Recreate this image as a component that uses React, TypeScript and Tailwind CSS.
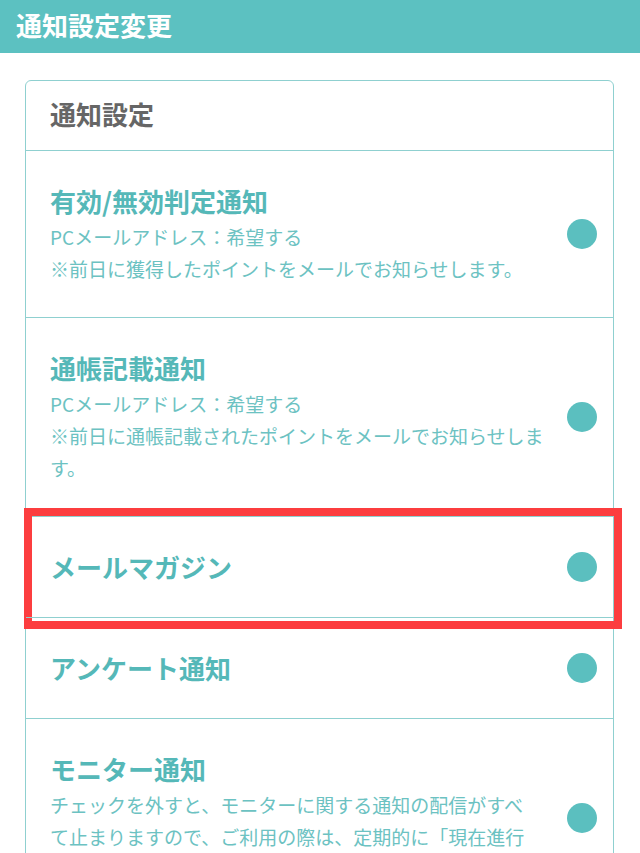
import React from 'react';

const FONT = { fontFamily: '"Noto Sans CJK JP", "Noto Sans", sans-serif' };

function Dot() {
  return <span className="w-[30px] h-[30px] rounded-full bg-[#5bbfbf] flex-shrink-0" />;
}

function Row({ title, lines, boxed }: { title: string; lines?: React.ReactNode[]; boxed?: boolean }) {
  return (
    <div className="relative border-t border-[#8fd0d0] flex items-center pl-6 pr-4 py-8">
      <div className="flex-1 mr-[13px]">
        <div className="text-[26px] leading-[36px] font-bold text-[#55b8b8]">{title}</div>
        {lines && (
          <div className="mt-[2px] text-[19px] leading-[32px] text-[#6cc2c2]">
            {lines.map((l, i) => (
              <p key={i}>{l}</p>
            ))}
          </div>
        )}
      </div>
      <Dot />
      {/* annotation frame */}
      {boxed && (
        <div className="absolute -top-[9px] -left-[2px] -right-[9px] -bottom-[12px] border-[8px] border-[#fc3d3f] pointer-events-none" />
      )}
    </div>
  );
}

export default function App() {
  return (
    <div className="min-h-screen bg-white" style={FONT}>
      {/* Header */}
      <header className="h-[53px] bg-[#5cc1c1] flex items-center px-4">
        <h1 className="text-[26px] font-bold text-white leading-none -mt-[4px]">通知設定変更</h1>
      </header>

      <main className="pt-[27px] pl-[25px] pr-[26px] pb-10">
        <section className="border border-[#8fd0d0] rounded-md">
          <div className="h-[69px] flex items-center pl-6">
            <h2 className="text-[26px] font-bold text-[#666666] -mt-[4px]">通知設定</h2>
          </div>

          <Row
            title="有効/無効判定通知"
            lines={['PCメールアドレス：希望する', '※前日に獲得したポイントをメールでお知らせします。']}
          />
          <Row
            title="通帳記載通知"
            lines={['PCメールアドレス：希望する', '※前日に通帳記載されたポイントをメールでお知らせします。']}
          />
          <Row title="メールマガジン" boxed />
          <Row title="アンケート通知" />
          <Row
            title="モニター通知"
            lines={[
              'チェックを外すと、モニターに関する通知の配信がすべ',
              'て止まりますので、ご利用の際は、定期的に「現在進行',
              '中のモニター」をご確認ください。',
            ]}
          />
        </section>
      </main>
    </div>
  );
}
